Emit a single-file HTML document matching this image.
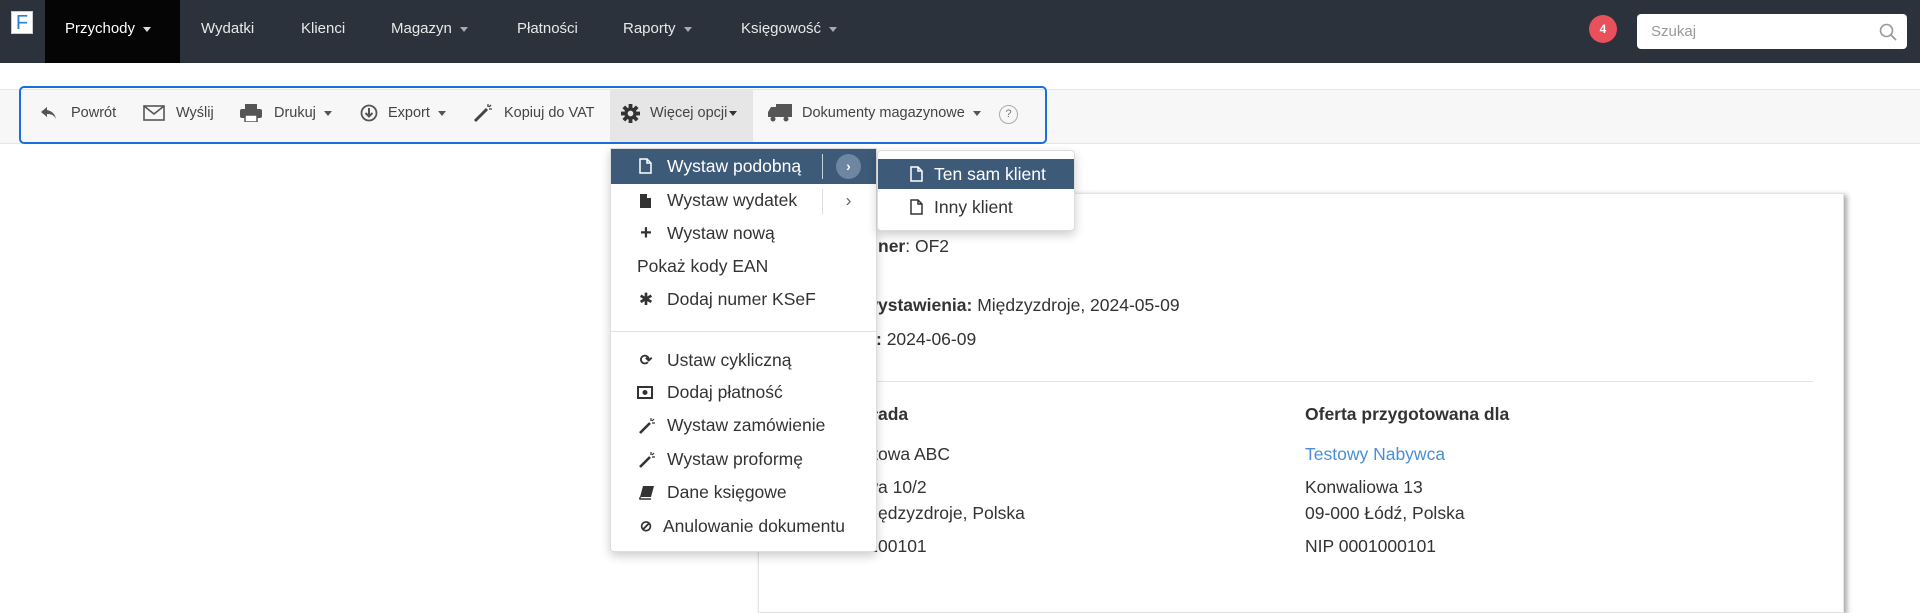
<!DOCTYPE html>
<html><head><meta charset="utf-8">
<style>
*{box-sizing:border-box;margin:0;padding:0}
body{width:1920px;height:587px;overflow:hidden;background:#fff;font-family:"Liberation Sans",Arial,sans-serif;color:#333;position:relative}
.nav{position:absolute;left:0;top:0;width:1920px;height:63px;background:#2b323c}
.nav .it{position:absolute;top:0;height:63px;line-height:58px;color:#e8e8e8;font-size:15px}
.caret{display:inline-block;width:0;height:0;border-left:4px solid transparent;border-right:4px solid transparent;border-top:5px solid #aaa;vertical-align:middle;margin-left:8px}
.logo{position:absolute;left:11px;top:11px;width:22px;height:23px;background:#fff;color:#2a7fd0;font-size:20px;line-height:23px;text-align:center;border:1px solid #ccc}
.badge{position:absolute;left:1589px;top:15px;width:28px;height:28px;border-radius:50%;background:#e8505b;color:#fff;font-size:12px;font-weight:bold;text-align:center;line-height:28px}
.search{position:absolute;left:1637px;top:14px;width:270px;height:35px;background:#fff;border-radius:4px;color:#999;font-size:15px;line-height:35px;padding-left:14px}
.strip{position:absolute;left:0;top:89px;width:1920px;height:55px;background:#f7f7f7;border-top:1px solid #e6e6e6;border-bottom:1px solid #e6e6e6}
.blue{position:absolute;left:19px;top:86px;width:1028px;height:58px;border:2px solid #1a6fe0;border-radius:5px}
.tb{position:absolute;top:103px;font-size:14.5px;color:#444;line-height:20px;white-space:nowrap}
.tb svg{position:absolute}
.more{position:absolute;left:610px;top:90px;width:143px;height:53px;background:#e6e6e6}
.card{position:absolute;left:758px;top:193px;width:1086px;height:420px;background:#fff;border:1px solid #e3e3e3;box-shadow:3px 2px 5px rgba(0,0,0,.35)}
.t{position:absolute;font-size:17.5px;white-space:nowrap;color:#333}
.t .h{position:absolute;right:100%;top:0}
.menu{position:absolute;left:610px;top:148px;width:267px;height:404px;background:#fff;border:1px solid #ddd;box-shadow:0 4px 10px rgba(0,0,0,.2);border-radius:0 0 4px 4px}
.mi{position:absolute;left:0;width:265px;height:33px;font-size:17.5px;line-height:33px;color:#333;white-space:nowrap}
.mi .ic{position:absolute;left:26px;top:0;width:18px;height:33px;text-align:center;font-size:15px}
.mi .ic svg{position:absolute;left:2px;top:9px}
.mi .tx{position:absolute;left:56px}
.sub{position:absolute;left:877px;top:150px;width:198px;height:81px;background:#fff;border:1px solid #ddd;box-shadow:0 4px 10px rgba(0,0,0,.2);border-radius:4px}
</style></head><body>
<div class="nav">
  <div class="logo">F</div>
  <div style="position:absolute;left:45px;top:0;width:135px;height:63px;background:#050505"></div>
  <div class="it" style="left:65px;color:#fff">Przychody<span class="caret" style="border-top-color:#ddd"></span></div>
  <div class="it" style="left:201px">Wydatki</div>
  <div class="it" style="left:301px">Klienci</div>
  <div class="it" style="left:391px">Magazyn<span class="caret"></span></div>
  <div class="it" style="left:517px">Płatności</div>
  <div class="it" style="left:623px">Raporty<span class="caret"></span></div>
  <div class="it" style="left:741px">Księgowość<span class="caret"></span></div>
  <div class="badge">4</div>
  <div class="search">Szukaj
    <svg style="position:absolute;right:10px;top:9px" width="18" height="18" viewBox="0 0 18 18"><circle cx="7.5" cy="7.5" r="6" fill="none" stroke="#999" stroke-width="1.6"/><line x1="12" y1="12" x2="17" y2="17" stroke="#999" stroke-width="1.8"/></svg>
  </div>
</div>

<div class="strip"></div>
<div class="more"></div>
<div class="blue"></div>

<div class="tb" style="left:40px"><svg style="left:0;top:2px" width="18" height="16" viewBox="0 0 18 16"><path d="M7 2 L1 7 L7 12 V9 C11 9 14 10 16 14 C15 9 12 6 7 5 Z" fill="#555"/></svg><span style="margin-left:31px">Powrót</span></div>
<div class="tb" style="left:143px"><svg style="left:0;top:2px" width="22" height="16" viewBox="0 0 22 16"><rect x="1" y="1" width="20" height="14" fill="none" stroke="#555" stroke-width="1.6"/><path d="M1 1 L11 9 L21 1" fill="none" stroke="#555" stroke-width="1.6"/></svg><span style="margin-left:33px">Wyślij</span></div>
<div class="tb" style="left:240px"><svg style="left:0;top:1px" width="22" height="18" viewBox="0 0 22 18"><rect x="5" y="0" width="12" height="5" fill="#555"/><rect x="0" y="5" width="22" height="9" rx="2" fill="#555"/><rect x="5" y="11" width="12" height="7" fill="#fff" stroke="#555" stroke-width="1.5"/></svg><span style="margin-left:34px">Drukuj<span class="caret" style="border-top-color:#555"></span></span></div>
<div class="tb" style="left:360px"><svg style="left:0;top:1px" width="18" height="18" viewBox="0 0 18 18"><circle cx="9" cy="9" r="7.5" fill="none" stroke="#555" stroke-width="1.8"/><path d="M9 4 V12 M5.5 9 L9 12.5 L12.5 9" fill="none" stroke="#555" stroke-width="2"/></svg><span style="margin-left:28px">Export<span class="caret" style="border-top-color:#555"></span></span></div>
<div class="tb" style="left:473px"><svg style="left:0;top:0" width="20" height="20" viewBox="0 0 20 20"><line x1="2" y1="18" x2="14" y2="6" stroke="#444" stroke-width="3"/><path d="M15 1 V4 M18 2 L16 4 M19 6 H16" stroke="#444" stroke-width="1.3"/></svg><span style="margin-left:31px">Kopiuj do VAT</span></div>
<div class="tb" style="left:621px"><svg style="left:0;top:1px" width="19" height="19" viewBox="0 0 20 20"><g fill="#333"><circle cx="10" cy="10" r="6.5"/><rect x="8" y="0" width="4" height="20"/><rect x="0" y="8" width="20" height="4"/><rect x="8" y="0" width="4" height="20" transform="rotate(45 10 10)"/><rect x="8" y="0" width="4" height="20" transform="rotate(-45 10 10)"/></g><circle cx="10" cy="10" r="3" fill="#e6e6e6"/></svg><span style="margin-left:29px">Więcej opcji<span class="caret" style="border-top-color:#333;margin-left:2px"></span></span></div>
<div class="tb" style="left:768px"><svg style="left:0;top:1px" width="24" height="18" viewBox="0 0 24 18"><rect x="8" y="0" width="16" height="13" fill="#555"/><path d="M0 8 L3 3 H8 V13 H0 Z" fill="#555"/><circle cx="5" cy="15" r="2.5" fill="#555"/><circle cx="18" cy="15" r="2.5" fill="#555"/></svg><span style="margin-left:34px">Dokumenty magazynowe<span class="caret" style="border-top-color:#555"></span></span></div>
<div class="tb" style="left:999px;top:105px;width:19px;height:19px;border:1px solid #aaa;border-radius:50%;font-size:11px;line-height:17px;text-align:center;color:#777">?</div>

<div class="card"></div>
<div class="t" style="left:878px;top:236px"><b class="h">Nu</b><b>ner</b>: OF2</div>
<div class="t" style="left:878px;top:295px"><b class="h">Data w</b><b>ystawienia:</b> Międzyzdroje, 2024-05-09</div>
<div class="t" style="left:876px;top:329px"><b class="h">Ważna do</b><b>:</b> 2024-06-09</div>
<div style="position:absolute;left:790px;top:381px;width:1023px;height:1px;background:#e3e3e3"></div>
<div class="t" style="left:878px;top:404px"><b class="h">Oferta skł</b><b>ada</b></div>
<div class="t" style="left:878px;top:444px"><span class="h">Firma Test</span>owa ABC</div>
<div class="t" style="left:878px;top:477px"><span class="h">ul. Testow</span>a 10/2</div>
<div class="t" style="left:878px;top:503px"><span class="h">72-500 Mi</span>ędzyzdroje, Polska</div>
<div class="t" style="left:878px;top:536px"><span class="h">NIP 0001</span>00101</div>
<div class="t" style="left:1305px;top:404px"><b>Oferta przygotowana dla</b></div>
<div class="t" style="left:1305px;top:444px;color:#4a8fd6">Testowy Nabywca</div>
<div class="t" style="left:1305px;top:477px">Konwaliowa 13</div>
<div class="t" style="left:1305px;top:503px">09-000 Łódź, Polska</div>
<div class="t" style="left:1305px;top:536px">NIP 0001000101</div>

<div class="menu">
  <div class="mi" style="top:0;height:35px;background:#3d5a79;color:#fff;line-height:35px"><span class="ic"><svg width="13" height="16" viewBox="0 0 13 16"><path d="M1 1 H8 L12 5 V15 H1 Z M8 1 V5 H12" fill="none" stroke="#fff" stroke-width="1.5"/></svg></span><span class="tx">Wystaw podobną</span>
    <div style="position:absolute;left:211px;top:5px;width:1px;height:25px;background:#c8d2dd"></div>
    <div style="position:absolute;left:225px;top:5px;width:25px;height:25px;border-radius:50%;background:#6e86a2;color:#fff;font-size:14px;line-height:25px;text-align:center;font-weight:bold">›</div></div>
  <div class="mi" style="top:35px"><span class="ic"><svg width="13" height="16" viewBox="0 0 13 16"><path d="M1 1 H8 L12 5 V15 H1 Z" fill="#333"/><path d="M8 1 V5 H12" fill="#fff"/></svg></span><span class="tx">Wystaw wydatek</span>
    <div style="position:absolute;left:211px;top:5px;width:1px;height:25px;background:#ddd"></div>
    <div style="position:absolute;left:225px;top:0;width:25px;text-align:center;color:#666">›</div></div>
  <div class="mi" style="top:68px"><span class="ic" style="font-weight:bold;font-size:20px">+</span><span class="tx">Wystaw nową</span></div>
  <div class="mi" style="top:101px"><span class="tx" style="left:26px">Pokaż kody EAN</span></div>
  <div class="mi" style="top:134px"><span class="ic" style="font-size:17px">✱</span><span class="tx">Dodaj numer KSeF</span></div>
  <div style="position:absolute;left:0;top:182px;width:265px;height:1px;background:#e0e0e0"></div>
  <div class="mi" style="top:195px"><span class="ic" style="font-weight:bold">⟳</span><span class="tx">Ustaw cykliczną</span></div>
  <div class="mi" style="top:227px"><span class="ic"><svg width="16" height="14" viewBox="0 0 16 14" style="left:0;top:10px"><rect x="1" y="1" width="14" height="11" fill="none" stroke="#333" stroke-width="2"/><circle cx="8" cy="6.5" r="2.5" fill="#333"/></svg></span><span class="tx">Dodaj płatność</span></div>
  <div class="mi" style="top:260px"><span class="ic"><svg width="16" height="16" viewBox="0 0 16 16"><line x1="1" y1="15" x2="11" y2="5" stroke="#333" stroke-width="2.6"/><path d="M12 0 V3 M15 1 L13 3 M16 5 H13" stroke="#333" stroke-width="1.2"/></svg></span><span class="tx">Wystaw zamówienie</span></div>
  <div class="mi" style="top:294px"><span class="ic"><svg width="16" height="16" viewBox="0 0 16 16"><line x1="1" y1="15" x2="11" y2="5" stroke="#333" stroke-width="2.6"/><path d="M12 0 V3 M15 1 L13 3 M16 5 H13" stroke="#333" stroke-width="1.2"/></svg></span><span class="tx">Wystaw proformę</span></div>
  <div class="mi" style="top:327px"><span class="ic"><svg width="16" height="15" viewBox="0 0 16 15"><path d="M4 1 H15 L12 12 H1 Z" fill="#333"/><path d="M1 12 L1 14 H12" fill="none" stroke="#333" stroke-width="1.5"/></svg></span><span class="tx">Dane księgowe</span></div>
  <div class="mi" style="top:361px"><span class="ic" style="font-weight:bold">⊘</span><span class="tx" style="left:52px">Anulowanie dokumentu</span></div>
</div>
<div class="sub">
  <div class="mi" style="top:8px;width:196px;height:30px;line-height:30px;background:#3d5a79;color:#fff"><span class="ic" style="left:30px;height:30px"><svg width="13" height="16" viewBox="0 0 13 16" style="top:7px"><path d="M1 1 H8 L12 5 V15 H1 Z M8 1 V5 H12" fill="none" stroke="#fff" stroke-width="1.5"/></svg></span><span class="tx">Ten sam klient</span></div>
  <div class="mi" style="top:41px;width:196px;height:30px;line-height:30px"><span class="ic" style="left:30px;height:30px"><svg width="13" height="16" viewBox="0 0 13 16" style="top:7px"><path d="M1 1 H8 L12 5 V15 H1 Z M8 1 V5 H12" fill="none" stroke="#333" stroke-width="1.5"/></svg></span><span class="tx">Inny klient</span></div>
</div>
</body></html>
